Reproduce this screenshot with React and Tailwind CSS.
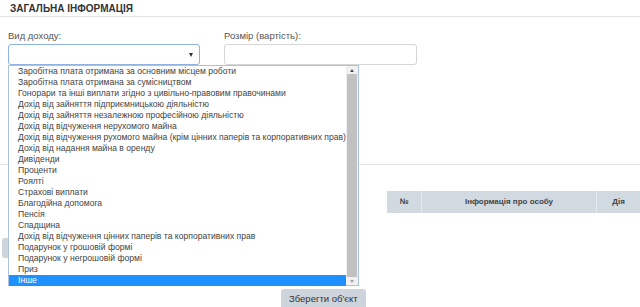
import React from 'react';

const incomeTypes = [
    'Заробітна плата отримана за основним місцем роботи',
    'Заробітна плата отримана за сумісництвом',
    'Гонорари та інші виплати згідно з цивільно-правовим правочинами',
    'Дохід від зайняття підприємницькою діяльністю',
    'Дохід від зайняття незалежною професійною діяльністю',
    'Дохід від відчуження нерухомого майна',
    'Дохід від відчуження рухомого майна (крім цінних паперів та корпоративних прав)',
    'Дохід від надання майна в оренду',
    'Дивіденди',
    'Проценти',
    'Роялті',
    'Страхові виплати',
    'Благодійна допомога',
    'Пенсія',
    'Спадщина',
    'Дохід від відчуження цінних паперів та корпоративних прав',
    'Подарунок у грошовій формі',
    'Подарунок у негрошовій формі',
    'Приз',
    'Інше',
];

function App() {
    const [selected, setSelected] = React.useState(incomeTypes.length - 1);

    return (
        <div className="relative w-[640px] h-[307px] overflow-hidden bg-white text-[#333] font-['Liberation_Sans',Arial,sans-serif]">
            {/* Заголовок */}
            <div className="h-[17px] border-b border-[#e3e3e3] pl-[10px] pt-[3px]">
                <h1 className="text-[10px] leading-[11px] font-bold uppercase text-[#333]">Загальна інформація</h1>
            </div>

            {/* Форма */}
            <div className="flex gap-[24px] pl-[8px] pt-[13px]">
                <div className="flex flex-col w-[192px]">
                    <label className="text-[9.5px] leading-[11px] text-[#555] mb-[3px]">Вид доходу:</label>
                    <div className="relative h-[21px] border border-[#8fb3e0] rounded-[3px] bg-white">
                        <span className="absolute right-[6px] top-[8px] w-0 h-0 border-l-[2.5px] border-r-[2.5px] border-t-[4px] border-l-transparent border-r-transparent border-t-[#333]"></span>
                    </div>
                </div>
                <div className="flex flex-col w-[193px]">
                    <label className="text-[9.5px] leading-[11px] text-[#555] mb-[3px]">Розмір (вартість):</label>
                    <div className="h-[21px] border border-[#d6d6d6] rounded-[3px] bg-white"></div>
                </div>
            </div>

            {/* Нижня частина під списком */}
            <div className="mt-[99px] border-t border-[#e3e3e3]"></div>
            <div className="flex pl-[387px] pt-[26px]">
                <div className="flex h-[22px] w-[253px] bg-[#d2dae1] text-[8px] font-bold text-[#444]">
                    <div className="w-[35px] flex items-center justify-center border-r border-[#e4e9ee]">№</div>
                    <div className="w-[175px] flex items-center justify-center border-r border-[#e4e9ee]">Інформація про особу</div>
                    <div className="flex-1 flex items-center justify-center">Дія</div>
                </div>
            </div>
            <div className="pl-[2px] pt-[25px]">
                <div className="w-[60px] h-[20px] rounded-[3px] bg-[#cdd4db]"></div>
            </div>
            <div className="pl-[281px] pt-[27px]">
                <button className="h-[20px] px-[8px] rounded-[3px] bg-[#cdd4db] text-[9.5px] text-[#333]">Зберегти об'єкт</button>
            </div>

            {/* Відкритий список */}
            <div className="absolute left-[8px] top-[65px] w-[351px] h-[221px] border border-[#a9c2e0] bg-white flex">
                <ul className="flex-1 flex flex-col">
                    {incomeTypes.map((item, i) => (
                        <li
                            key={i}
                            onMouseEnter={() => setSelected(i)}
                            className={`h-[11px] leading-[11px] pl-[9px] text-[8.6px] whitespace-nowrap ${i === selected ? 'bg-[#1e90ff] text-white' : 'text-[#444]'}`}
                        >
                            {item}
                        </li>
                    ))}
                </ul>
                <div className="w-[12px] flex flex-col bg-[#f1f1f1]">
                    <div className="h-[8px] flex items-center justify-center">
                        <span className="w-0 h-0 border-l-[2px] border-r-[2px] border-b-[3px] border-l-transparent border-r-transparent border-b-[#505050]"></span>
                    </div>
                    <div className="flex-1 mx-[1px] bg-[#c1c1c1]"></div>
                    <div className="h-[8px] flex items-center justify-center">
                        <span className="w-0 h-0 border-l-[2px] border-r-[2px] border-t-[3px] border-l-transparent border-r-transparent border-t-[#a3a3a3]"></span>
                    </div>
                </div>
            </div>
        </div>
    );
}

export default App;
